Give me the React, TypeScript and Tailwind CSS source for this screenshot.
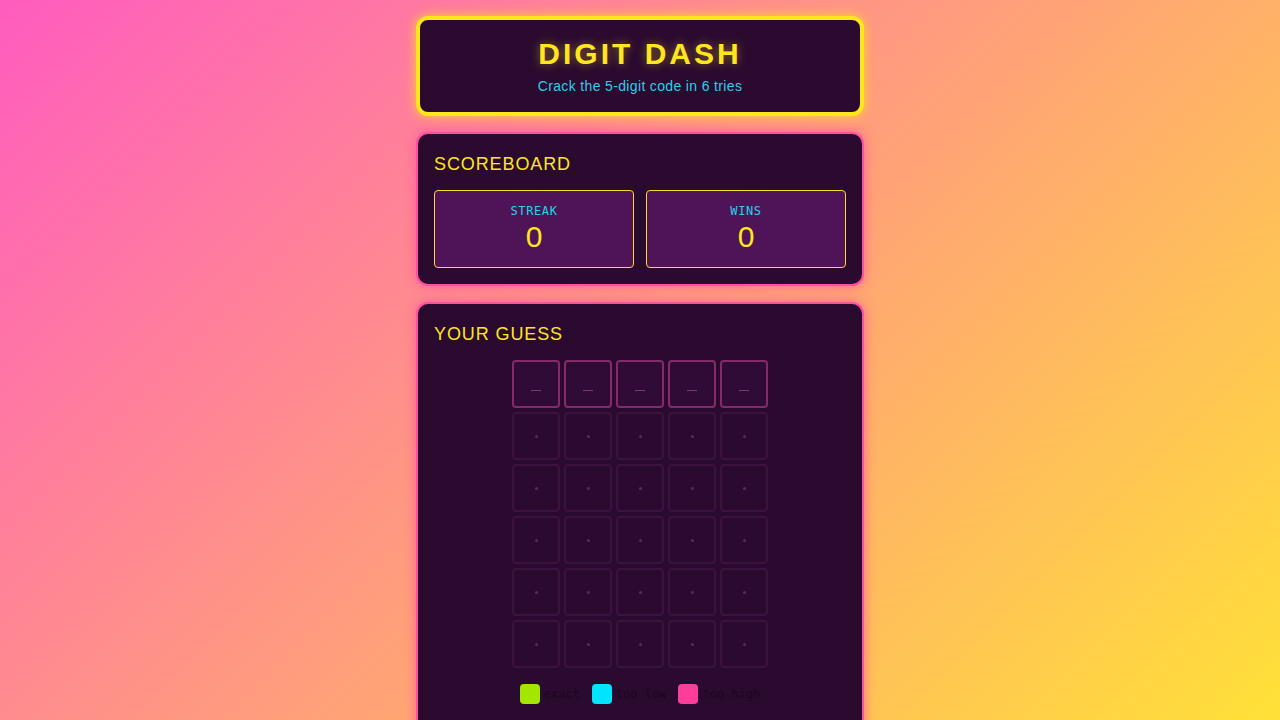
import React from "react";

const sans = "font-['Liberation_Sans','Arial',sans-serif]";
const mono = "font-['DejaVu_Sans_Mono','Liberation_Mono',monospace]";

function Stat({ label, value }: { label: string; value: number }) {
  return (
    <div className="flex flex-col items-center rounded-[4px] border border-[#ffd82a] bg-[#4e1457] py-3">
      <div className={`${mono} text-xs leading-4 tracking-wider text-[#2ccfe8]`}>{label}</div>
      <div className={`${sans} text-[30px] leading-9 text-[#ffe61e]`}>{value}</div>
    </div>
  );
}

function Cell({ active }: { active: boolean }) {
  return (
    <div
      className={
        active
          ? "flex h-12 w-12 items-center justify-center rounded-[4px] border-2 border-[#862a6c] bg-[#300b35]"
          : "flex h-12 w-12 items-center justify-center rounded-[4px] border-2 border-[#3b1140] bg-[#2b0a30]"
      }
    >
      {active ? (
        <span className="mt-3 h-px w-[10px] bg-[#7a3a7a]" />
      ) : (
        <span className="h-[3px] w-[3px] rounded-full bg-[#5b2a5e]" />
      )}
    </div>
  );
}

export default function App() {
  const rows = [0, 1, 2, 3, 4, 5];
  const cols = [0, 1, 2, 3, 4];
  return (
    <div className="min-h-screen bg-[linear-gradient(135deg,#ff5cbf,#ffe236)] pt-4">
      <div className="mx-auto flex w-[448px] flex-col gap-4">
        <div className="rounded-xl border-4 border-[#ffe81a] bg-[#2a0a2f] pt-4 pb-4 text-center shadow-[0_0_12px_rgba(255,232,26,0.8)]">
          <h1
            className={`${sans} text-3xl leading-9 font-bold tracking-widest text-[#ffe61e] [text-shadow:0_0_10px_rgba(255,220,30,0.45)]`}
          >
            DIGIT DASH
          </h1>
          <p className={`${sans} mt-1 text-sm leading-5 tracking-wide text-[#2ccfe8]`}>
            Crack the 5-digit code in 6 tries
          </p>
        </div>

        <div className="rounded-xl border-2 border-[#ff4fa0] bg-[#2a0a2f] p-4 shadow-[0_0_12px_rgba(255,79,160,0.8)]">
          <h2 className={`${sans} mb-3 text-lg leading-7 tracking-wider text-[#ffe61e]`}>SCOREBOARD</h2>
          <div className="grid grid-cols-2 gap-3">
            <Stat label="STREAK" value={0} />
            <Stat label="WINS" value={0} />
          </div>
        </div>

        <div className="rounded-xl border-2 border-[#ff4fa0] bg-[#2a0a2f] p-4 shadow-[0_0_12px_rgba(255,79,160,0.8)]">
          <h2 className={`${sans} mb-3 text-lg leading-7 tracking-wider text-[#ffe61e]`}>YOUR GUESS</h2>
          <div className="flex flex-col items-center gap-1">
            {rows.map((r) => (
              <div key={r} className="flex gap-1">
                {cols.map((c) => (
                  <Cell key={c} active={r === 0} />
                ))}
              </div>
            ))}
          </div>
          <div className={`${mono} mt-4 flex justify-center gap-3 text-xs text-[#1c0620]`}>
            <div className="flex items-center gap-1">
              <span className="h-5 w-5 rounded-[4px] bg-[#a3e600]" />
              <span>exact</span>
            </div>
            <div className="flex items-center gap-1">
              <span className="h-5 w-5 rounded-[4px] bg-[#00e5ff]" />
              <span>too low</span>
            </div>
            <div className="flex items-center gap-1">
              <span className="h-5 w-5 rounded-[4px] bg-[#ff3d9a]" />
              <span>too high</span>
            </div>
          </div>
          <div className="h-4" />
        </div>
      </div>
    </div>
  );
}
